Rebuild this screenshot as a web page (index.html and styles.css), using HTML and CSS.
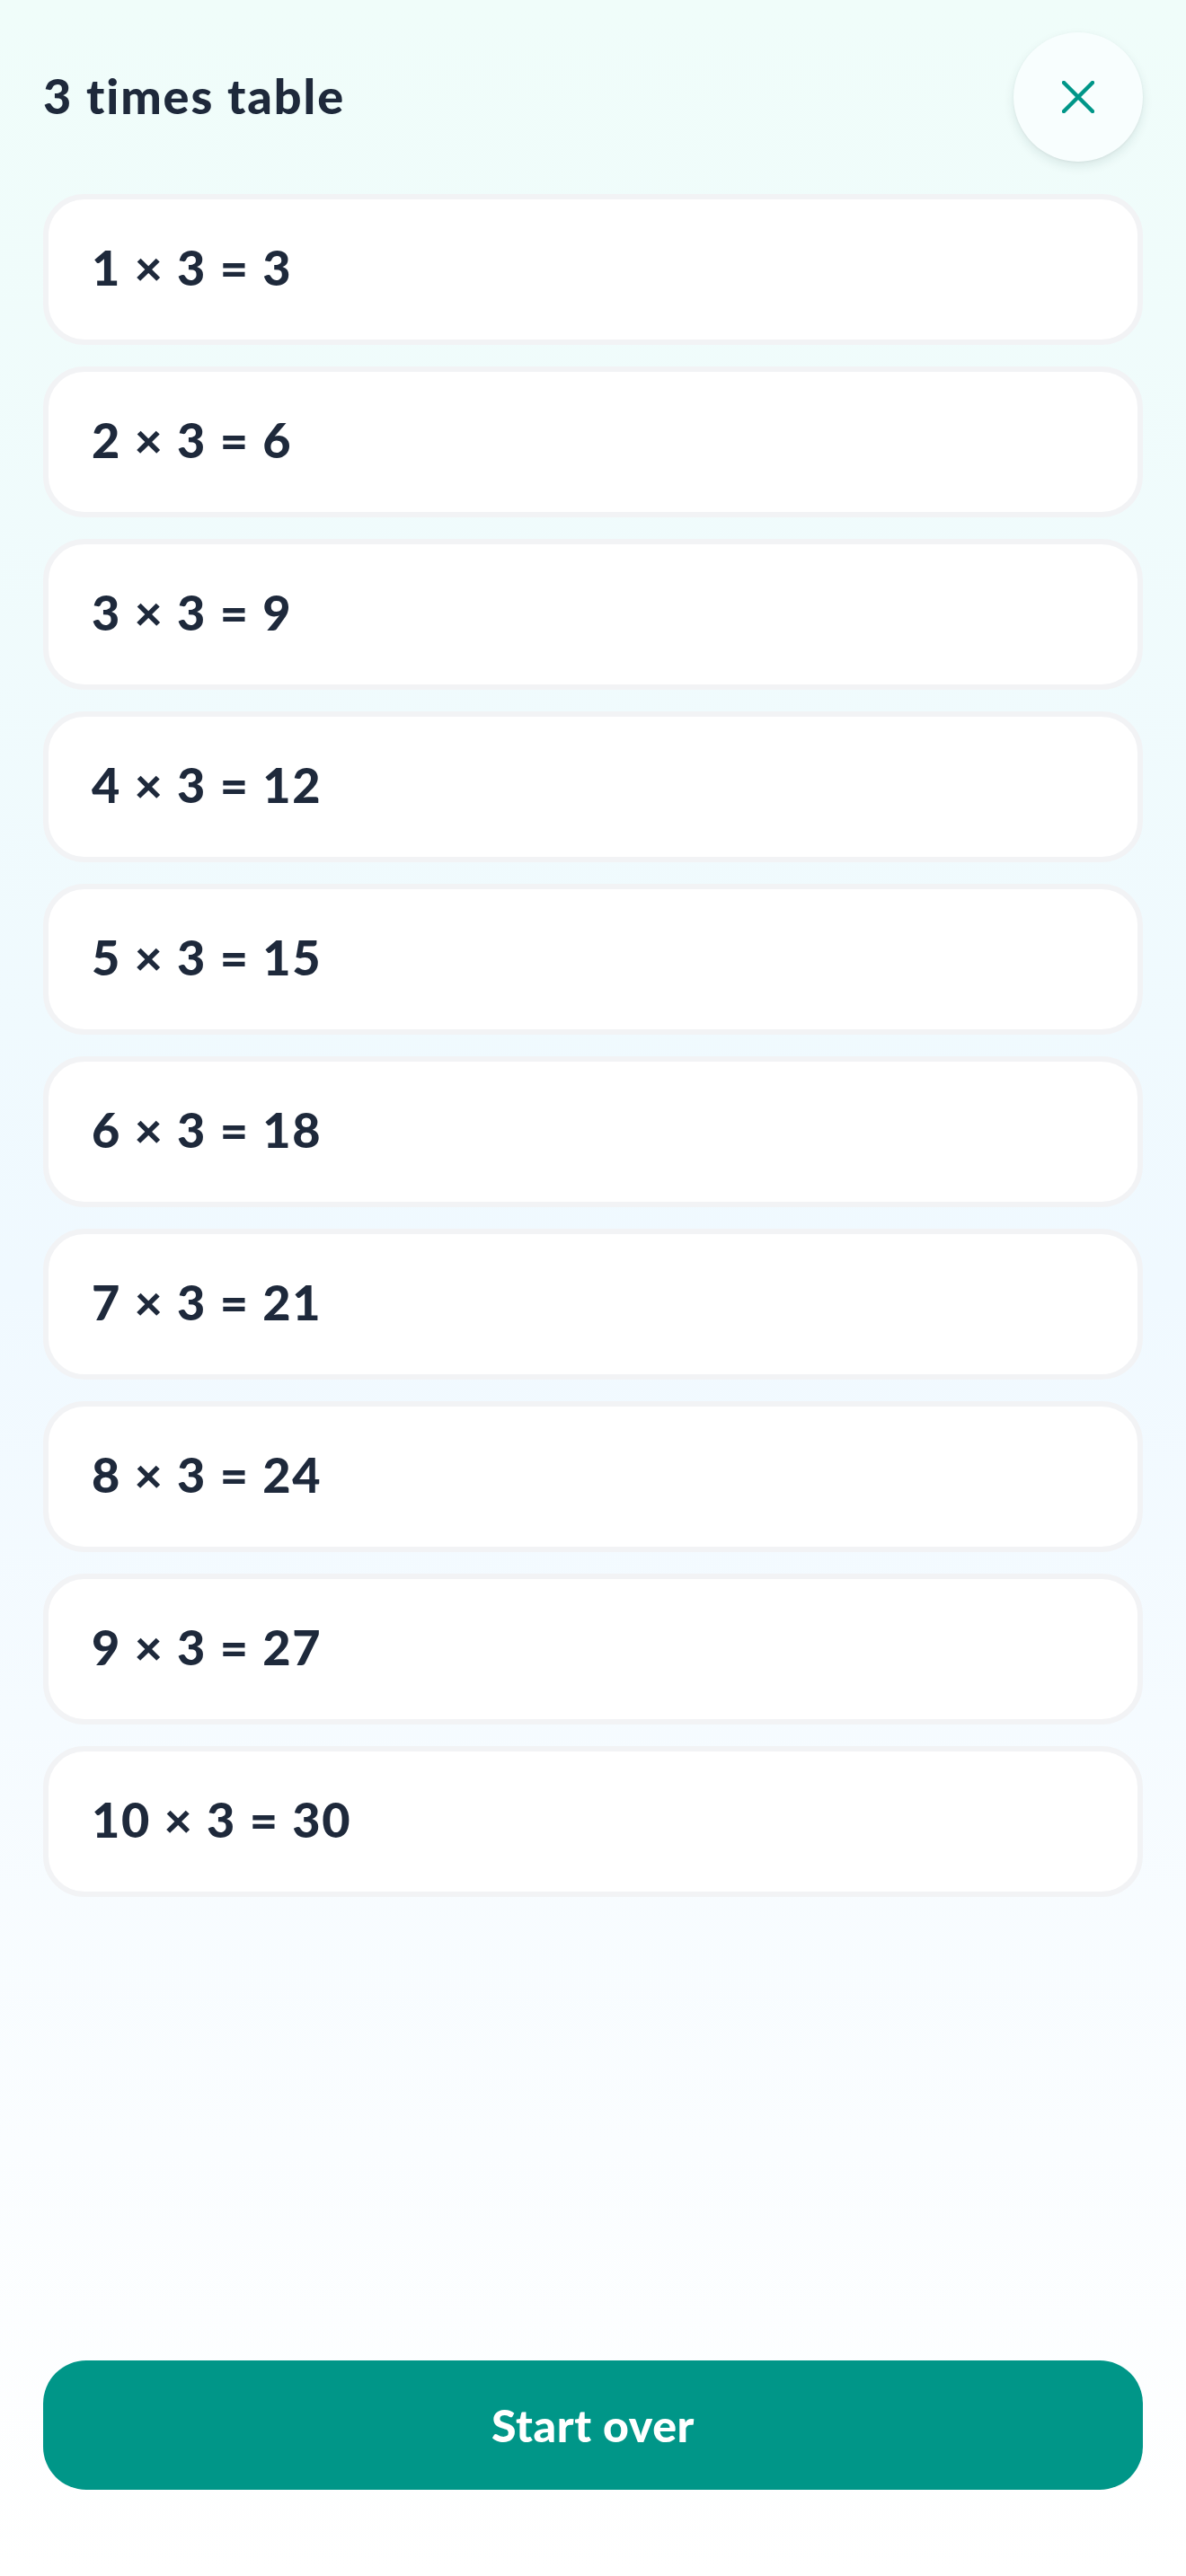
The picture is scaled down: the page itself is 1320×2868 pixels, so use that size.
FILE: index.html
```html
<!DOCTYPE html>
<html lang="en">
<head>
<meta charset="utf-8">
<title>3 times table</title>
<link rel="stylesheet" href="styles.css">
</head>
<body>
<div class="page">
  <header class="header">
    <h1 class="title">3 times table</h1>
    <button class="close" aria-label="Close">
      <svg width="36" height="36" viewBox="0 0 36 36" fill="none" stroke="#009688" stroke-width="4.5" stroke-linecap="round">
        <path d="M2 2 L34 34 M34 2 L2 34"/>
      </svg>
    </button>
  </header>
  <ul class="list">
    <li class="card">1 × 3 = 3</li>
    <li class="card">2 × 3 = 6</li>
    <li class="card">3 × 3 = 9</li>
    <li class="card">4 × 3 = 12</li>
    <li class="card">5 × 3 = 15</li>
    <li class="card">6 × 3 = 18</li>
    <li class="card">7 × 3 = 21</li>
    <li class="card">8 × 3 = 24</li>
    <li class="card">9 × 3 = 27</li>
    <li class="card">10 × 3 = 30</li>
  </ul>
  <div class="spacer"></div>
  <button class="start">Start over</button>
</div>
</body>
</html>
```
FILE: styles.css
```css
* { box-sizing: border-box; }
html, body { margin: 0; padding: 0; }
body {
  font-family: "Lato", "Noto Sans", sans-serif;
  color: #1e293b;
  background: linear-gradient(to bottom, #f0fdfa 0%, #f0f9ff 50%, #ffffff 100%);
  min-height: 2868px;
}
.page {
  min-height: 2868px;
  display: flex;
  flex-direction: column;
  padding: 36px 48px 96px;
}
.header {
  display: flex;
  align-items: center;
  justify-content: space-between;
  height: 144px;
}
.title {
  margin: 0 0 4px;
  font-size: 54px;
  font-weight: 900;
  letter-spacing: 1.9px;
}
.close {
  width: 144px;
  height: 144px;
  border-radius: 50%;
  border: none;
  background: #f8fefe;
  box-shadow: 0 5px 12px rgba(15, 60, 60, 0.10), 0 1px 3px rgba(0,0,0,0.05);
  display: flex;
  align-items: center;
  justify-content: center;
  padding: 0;
}
.list {
  list-style: none;
  margin: 36px 0 0;
  padding: 0;
  display: flex;
  flex-direction: column;
  gap: 24px;
}
.card {
  height: 168px;
  background: #ffffff;
  border: 6px solid #f2f3f5;
  border-radius: 46px;
  display: flex;
  align-items: center;
  padding: 0 48px 5px;
  font-size: 54px;
  font-weight: 900;
  letter-spacing: 1.7px;
}
.spacer { flex: 1; }
.start {
  height: 144px;
  border: none;
  border-radius: 48px;
  background: #009688;
  color: #ffffff;
  font-family: "Lato", "Noto Sans", sans-serif;
  font-size: 50px;
  font-weight: 900;
  letter-spacing: 0.6px;
  width: 100%;
}
```
